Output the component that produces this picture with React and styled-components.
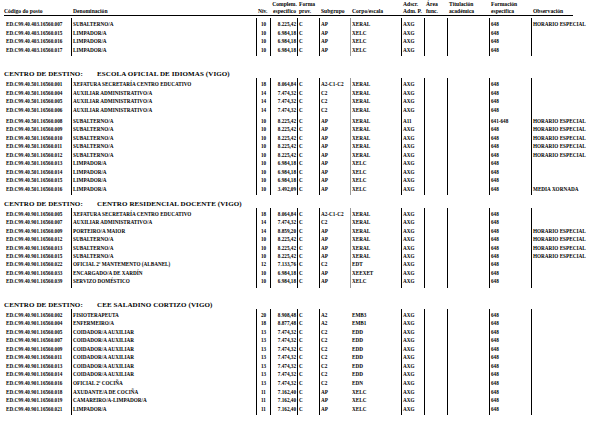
import React from "react";
import styled, { createGlobalStyle } from "styled-components";

const GlobalStyle = createGlobalStyle`
  body {
    margin: 0;
    background: #fff;
    color: #000;
    font-family: "Liberation Serif", "Times New Roman", serif;
  }
`;

const COLS = "67px 185px 14px 27px 22px 31px 51px 23px 23px 42px 42px 1fr";

const LINES_A = [null, "b", "b", "b", "b", "b", "g", "b", "b", "b", "b", "b"];
const LINES_B = [null, "b", "b", "b", "b", "b", null, "b", "b", "b", "b", "b"];
const ALIGN = ["left", "left", "center", "right", "left", "left", "left", "left", "left", "left", "left", "left"];

const Page = styled.div`
  width: 612px;
  padding: 1px 0 0 4px;
`;

const Header = styled.div`
  display: grid;
  grid-template-columns: ${COLS};
  width: 569px;
  border-bottom: 1px solid #000;
  font-size: 5.6px;
  font-weight: bold;
  line-height: 7px;
`;

const HeadCell = styled.div`
  display: flex;
  flex-direction: column;
  justify-content: flex-end;
  padding-left: ${p => p.$pad ?? 2}px;
  text-align: ${p => p.$align || "left"};
  white-space: nowrap;
`;

const Block = styled.div`
  margin-top: ${p => p.$mt}px;
`;

const Row = styled.div`
  display: grid;
  grid-template-columns: ${COLS};
  font-size: 5.2px;
  font-weight: bold;
  line-height: ${p => p.$h}px;
  & > div {
    padding-top: ${p => p.$pt || 0}px;
    padding-bottom: ${p => p.$pb || 0}px;
  }
`;

const Cell = styled.div`
  border-left: ${p =>
    p.$line === "g" ? "1px solid #9a9a9a" : p.$line === "b" ? "1px solid #000" : "1px solid transparent"};
  padding-left: 1px;
  padding-right: 1px;
  text-align: ${p => p.$align};
  white-space: nowrap;
  min-height: ${p => p.$h}px;
`;

const Heading = styled.div`
  display: flex;
  margin-top: ${p => p.$mt}px;
  height: 8px;
  line-height: 8px;
  font-size: 7px;
  font-weight: bold;
  letter-spacing: 0.1px;
`;

const HeadLabel = styled.span`
  width: 93px;
`;

const head = [
  ["", "Código do posto"],
  ["", "Denominación"],
  ["", "Nív."],
  ["Complem.", "específico"],
  ["Forma", "prov."],
  ["", "Subgrupo"],
  ["", "Corpo/escala"],
  ["Adscr.", "Adm. P."],
  ["Área", "func."],
  ["Titulación", "académica"],
  ["Formación", "específica"],
  ["", "Observación"],
];

const sections = [
  {
    title: null,
    prefix: "ED.C99.40.403.16560.",
    mt: 2,
    h: 8.5,
    lines: LINES_A,
    rows: [
      ["007", "SUBALTERNO/A", "10", "8.225,42", "C", "AP", "XERAL", "AXG", "", "", "648", "HORARIO ESPECIAL"],
      ["015", "LIMPADOR/A", "10", "6.984,18", "C", "AP", "XELC", "AXG", "", "", "648", ""],
      ["016", "LIMPADOR/A", "10", "6.984,18", "C", "AP", "XELC", "AXG", "", "", "648", ""],
      ["017", "LIMPADOR/A", "10", "6.984,18", "C", "AP", "XELC", "AXG", "", "", "648", ""],
    ],
  },
  {
    title: "ESCOLA OFICIAL DE IDIOMAS (VIGO)",
    headMt: 14,
    prefix: "ED.C99.40.501.16560.",
    mt: 0,
    h: 8.5,
    gapAt: 4,
    lines: LINES_A,
    rows: [
      ["001", "XEFATURA SECRETARÍA CENTRO EDUCATIVO", "18", "8.064,84", "C", "A2-C1-C2", "XERAL", "AXG", "", "", "648", ""],
      ["004", "AUXILIAR ADMINISTRATIVO/A", "14", "7.474,32", "C", "C2", "XERAL", "AXG", "", "", "648", ""],
      ["005", "AUXILIAR ADMINISTRATIVO/A", "14", "7.474,32", "C", "C2", "XERAL", "AXG", "", "", "648", ""],
      ["006", "AUXILIAR ADMINISTRATIVO/A", "14", "7.474,32", "C", "C2", "XERAL", "AXG", "", "", "648", ""],
      ["008", "SUBALTERNO/A", "10", "8.225,42", "C", "AP", "XERAL", "A11", "", "", "641-648", "HORARIO ESPECIAL"],
      ["009", "SUBALTERNO/A", "10", "8.225,42", "C", "AP", "XERAL", "AXG", "", "", "648", "HORARIO ESPECIAL"],
      ["010", "SUBALTERNO/A", "10", "8.225,42", "C", "AP", "XERAL", "AXG", "", "", "648", "HORARIO ESPECIAL"],
      ["011", "SUBALTERNO/A", "10", "8.225,42", "C", "AP", "XERAL", "AXG", "", "", "648", "HORARIO ESPECIAL"],
      ["012", "SUBALTERNO/A", "10", "8.225,42", "C", "AP", "XERAL", "AXG", "", "", "648", "HORARIO ESPECIAL"],
      ["013", "LIMPADOR/A", "10", "6.984,18", "C", "AP", "XELC", "AXG", "", "", "648", ""],
      ["014", "LIMPADOR/A", "10", "6.984,18", "C", "AP", "XELC", "AXG", "", "", "648", ""],
      ["015", "LIMPADOR/A", "10", "6.984,18", "C", "AP", "XELC", "AXG", "", "", "648", ""],
      ["016", "LIMPADOR/A", "10", "3.492,09", "C", "AP", "XELC", "AXG", "", "", "648", "MEDIA XORNADA"],
    ],
  },
  {
    title: "CENTRO RESIDENCIAL DOCENTE (VIGO)",
    headMt: 5,
    prefix: "ED.C99.40.901.16560.",
    mt: 0,
    h: 8.4,
    lines: LINES_A,
    rows: [
      ["005", "XEFATURA SECRETARÍA CENTRO EDUCATIVO", "18", "8.064,84", "C", "A2-C1-C2", "XERAL", "AXG", "", "", "648", ""],
      ["007", "AUXILIAR ADMINISTRATIVO/A", "14", "7.474,32", "C", "C2", "XERAL", "AXG", "", "", "648", ""],
      ["009", "PORTEIRO/A MAIOR", "14", "8.859,20", "C", "AP", "XERAL", "AXG", "", "", "648", "HORARIO ESPECIAL"],
      ["012", "SUBALTERNO/A", "10", "8.225,42", "C", "AP", "XERAL", "AXG", "", "", "648", "HORARIO ESPECIAL"],
      ["013", "SUBALTERNO/A", "10", "8.225,42", "C", "AP", "XERAL", "AXG", "", "", "648", "HORARIO ESPECIAL"],
      ["015", "SUBALTERNO/A", "10", "8.225,42", "C", "AP", "XERAL", "AXG", "", "", "648", "HORARIO ESPECIAL"],
      ["022", "OFICIAL 2ª MANTEMENTO (ALBANEL)", "12", "7.133,76", "C", "C2", "EDT", "AXG", "", "", "648", ""],
      ["033", "ENCARGADO/A DE XARDÍN", "10", "6.984,18", "C", "AP", "XEEXET", "AXG", "", "", "648", ""],
      ["039", "SERVIZO DOMÉSTICO", "10", "6.984,18", "C", "AP", "XELC", "AXG", "", "", "648", ""],
    ],
  },
  {
    title: "CEE SALADINO CORTIZO (VIGO)",
    headMt: 13,
    prefix: "ED.C99.40.901.16560.",
    mt: 0,
    h: 8.55,
    lines: LINES_B,
    rows: [
      ["002", "FISIOTERAPEUTA", "20", "8.908,48", "C", "A2", "EMB3", "AXG", "", "", "648", ""],
      ["004", "ENFERMEIRO/A", "18", "8.877,48", "C", "A2", "EMB1", "AXG", "", "", "648", ""],
      ["005", "COIDADOR/A AUXILIAR", "13", "7.474,32", "C", "C2", "EDD", "AXG", "", "", "648", ""],
      ["007", "COIDADOR/A AUXILIAR", "13", "7.474,32", "C", "C2", "EDD", "AXG", "", "", "648", ""],
      ["009", "COIDADOR/A AUXILIAR", "13", "7.474,32", "C", "C2", "EDD", "AXG", "", "", "648", ""],
      ["011", "COIDADOR/A AUXILIAR", "13", "7.474,32", "C", "C2", "EDD", "AXG", "", "", "648", ""],
      ["013", "COIDADOR/A AUXILIAR", "13", "7.474,32", "C", "C2", "EDD", "AXG", "", "", "648", ""],
      ["014", "COIDADOR/A AUXILIAR", "13", "7.474,32", "C", "C2", "EDD", "AXG", "", "", "648", ""],
      ["016", "OFICIAL 2ª COCIÑA", "13", "7.474,32", "C", "C2", "EDN", "AXG", "", "", "648", ""],
      ["018", "AXUDANTE/A DE COCIÑA", "11", "7.162,40", "C", "AP", "XELC", "AXG", "", "", "648", ""],
      ["019", "CAMAREIRO/A-LIMPADOR/A", "11", "7.162,40", "C", "AP", "XELC", "AXG", "", "", "648", ""],
      ["021", "LIMPADOR/A", "11", "7.162,40", "C", "AP", "XELC", "AXG", "", "", "648", ""],
    ],
  },
];

function Section({ s }) {
  const last = s.rows.length - 1;
  return (
    <>
      {s.title && (
        <Heading $mt={s.headMt}>
          <HeadLabel>CENTRO DE DESTINO:</HeadLabel>
          <span>{s.title}</span>
        </Heading>
      )}
      <Block $mt={s.mt}>
        {s.rows.map((r, i) => {
          const cells = [s.prefix + r[0], ...r.slice(1)];
          let pt = i === 0 ? 2 : 0;
          if (s.gapAt === i) pt += 2.5;
          return (
            <Row key={r[0]} $h={s.h} $pt={pt} $pb={i === last ? 2 : 0}>
              {cells.map((c, j) => (
                <Cell key={j} $line={s.lines[j]} $align={ALIGN[j]} $h={s.h}>
                  {c}
                </Cell>
              ))}
            </Row>
          );
        })}
      </Block>
    </>
  );
}

export default function App() {
  return (
    <Page>
      <GlobalStyle />
      <Header>
        {head.map(([a, b], j) => (
          <HeadCell key={j} $align={j === 3 ? "center" : "left"} $pad={j === 0 ? 0 : 2}>
            <span>{a || "\u00a0"}</span>
            <span>{b}</span>
          </HeadCell>
        ))}
      </Header>
      {sections.map((s, i) => (
        <Section key={i} s={s} />
      ))}
    </Page>
  );
}
